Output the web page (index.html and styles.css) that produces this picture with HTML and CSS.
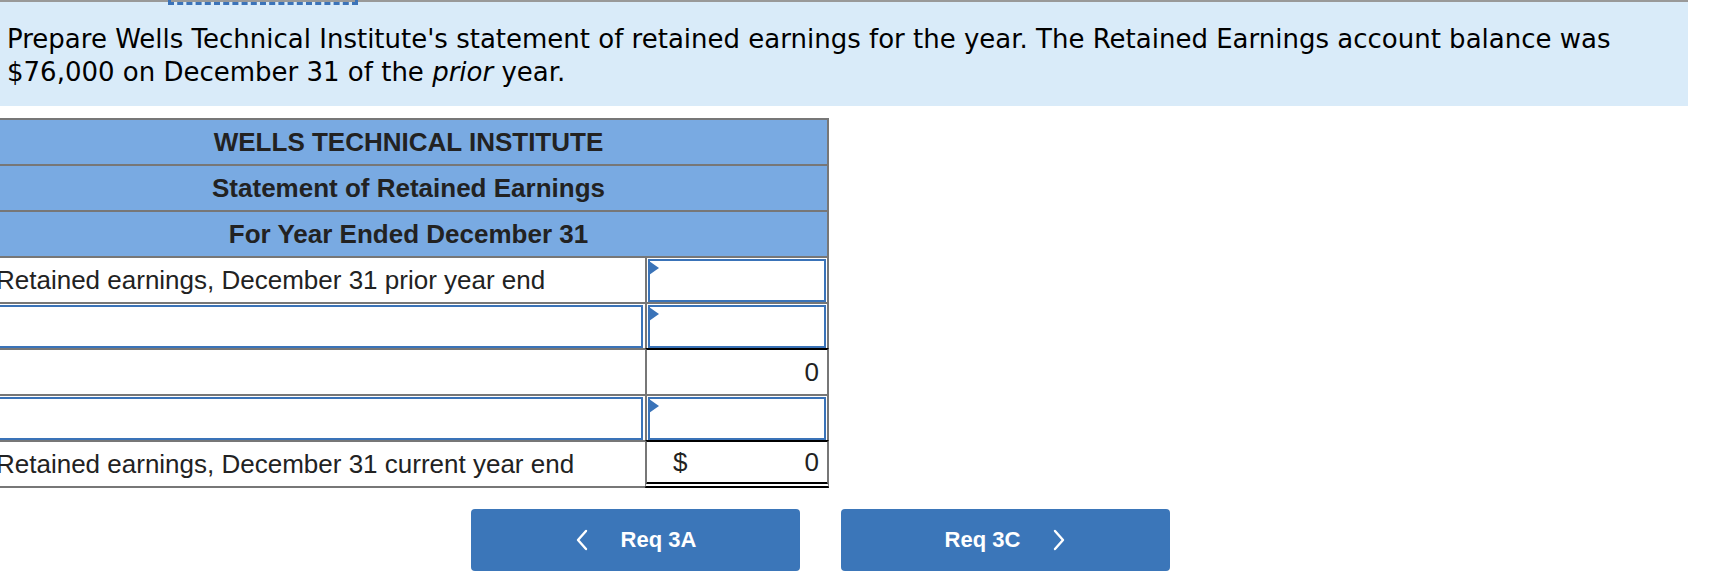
FILE: index.html
```html
<!DOCTYPE html>
<html>
<head>
<meta charset="utf-8">
<link rel="stylesheet" href="styles.css">
</head>
<body>
<div class="page">
  <div class="prompt">
    <span class="tab-focus"></span>
    <p>Prepare Wells Technical Institute's statement of retained earnings for the year. The Retained Earnings account balance was $76,000 on December 31 of the <i>prior</i> year.</p>
  </div>

  <div class="sheet">
    <div class="head">WELLS TECHNICAL INSTITUTE</div>
    <div class="head">Statement of Retained Earnings</div>
    <div class="head">For Year Ended December 31</div>

    <div class="cell label">Retained earnings, December 31 prior year end</div>
    <div class="cell val"><div class="input"><span class="flag"></span></div></div>

    <div class="cell label"><div class="input"></div></div>
    <div class="cell val"><div class="input"><span class="flag"></span></div></div>

    <div class="cell label"></div>
    <div class="cell val sum"><span class="num">0</span></div>

    <div class="cell label"><div class="input"></div></div>
    <div class="cell val"><div class="input"><span class="flag"></span></div></div>

    <div class="cell label">Retained earnings, December 31 current year end</div>
    <div class="cell val sum total"><span class="cur">$</span><span class="num">0</span></div>
  </div>

  <div class="nav">
    <button class="btn">
      <svg class="chev" width="14" height="22" viewBox="0 0 14 22"><path d="M11 2 L3 11 L11 20" fill="none" stroke="#ffffff" stroke-width="2.4" stroke-linecap="round" stroke-linejoin="round"/></svg>
      <span>Req 3A</span>
    </button>
    <button class="btn">
      <span>Req 3C</span>
      <svg class="chev" width="14" height="22" viewBox="0 0 14 22"><path d="M3 2 L11 11 L3 20" fill="none" stroke="#ffffff" stroke-width="2.4" stroke-linecap="round" stroke-linejoin="round"/></svg>
    </button>
  </div>
</div>
</body>
</html>
```

FILE: styles.css
```css
html, body {
  margin: 0;
  padding: 0;
  background: #ffffff;
}

.page {
  width: 1716px;
}

.prompt {
  position: relative;
  width: 1688px;
  box-sizing: border-box;
  height: 106px;
  border-top: 2px solid #999999;
  background: #d9ebf9;
  padding: 21px 7px 0 7px;
}

.prompt p {
  margin: 0;
  font-family: "DejaVu Sans", Verdana, sans-serif;
  font-size: 26px;
  line-height: 33px;
  color: #000000;
}

.tab-focus {
  position: absolute;
  left: 168px;
  top: -2px;
  width: 184px;
  height: 2px;
  border: 3px dashed #3b73b9;
  border-top: none;
}

.sheet {
  margin-top: 12px;
  margin-left: -10px;
  width: 839px;
  display: grid;
  grid-template-columns: 655px 184px;
  border-top: 2px solid #777777;
  font-family: "Liberation Sans", Arial, sans-serif;
  color: #222222;
}

.head {
  grid-column: 1 / 3;
  height: 44px;
  border-bottom: 2px solid #777777;
  border-right: 2px solid #777777;
  background: #79aae2;
  display: flex;
  align-items: center;
  justify-content: center;
  font-weight: bold;
  font-size: 26px;
}

.cell {
  height: 44px;
  border-bottom: 2px solid #777777;
  display: flex;
  align-items: center;
  font-size: 26px;
  position: relative;
}

.label {
  padding-left: 6px;
}

.val {
  border-left: 2px solid #777777;
  border-right: 2px solid #777777;
}

.input {
  position: absolute;
  left: 1px;
  top: 1px;
  right: 1px;
  bottom: 0;
  border: 2px solid #3a73b8;
  background: #ffffff;
}

.label .input {
  left: 0;
  right: 2px;
}

.flag {
  position: absolute;
  left: -1px;
  top: 0;
  width: 0;
  height: 0;
  border-top: 7px solid transparent;
  border-bottom: 7px solid transparent;
  border-left: 10px solid #3a73b8;
}

.sum {
  border-top: 2px solid #000000;
  margin-top: -2px;
  justify-content: flex-end;
  padding-right: 8px;
}

.total {
  justify-content: space-between;
  padding-left: 26px;
  border-bottom: 6px double #000000;
  height: 40px;
}

.num, .cur {
  line-height: 1;
}

.nav {
  width: 1641px;
  display: flex;
  justify-content: center;
  gap: 41px;
  margin-top: 21px;
}

.btn {
  width: 329px;
  height: 62px;
  border: none;
  border-radius: 4px;
  background: #3b76b9;
  color: #ffffff;
  font-family: "Liberation Sans", Arial, sans-serif;
  font-weight: bold;
  font-size: 22px;
  display: flex;
  align-items: center;
  justify-content: center;
  gap: 32px;
  padding: 0;
}

.chev {
  display: block;
}
```
